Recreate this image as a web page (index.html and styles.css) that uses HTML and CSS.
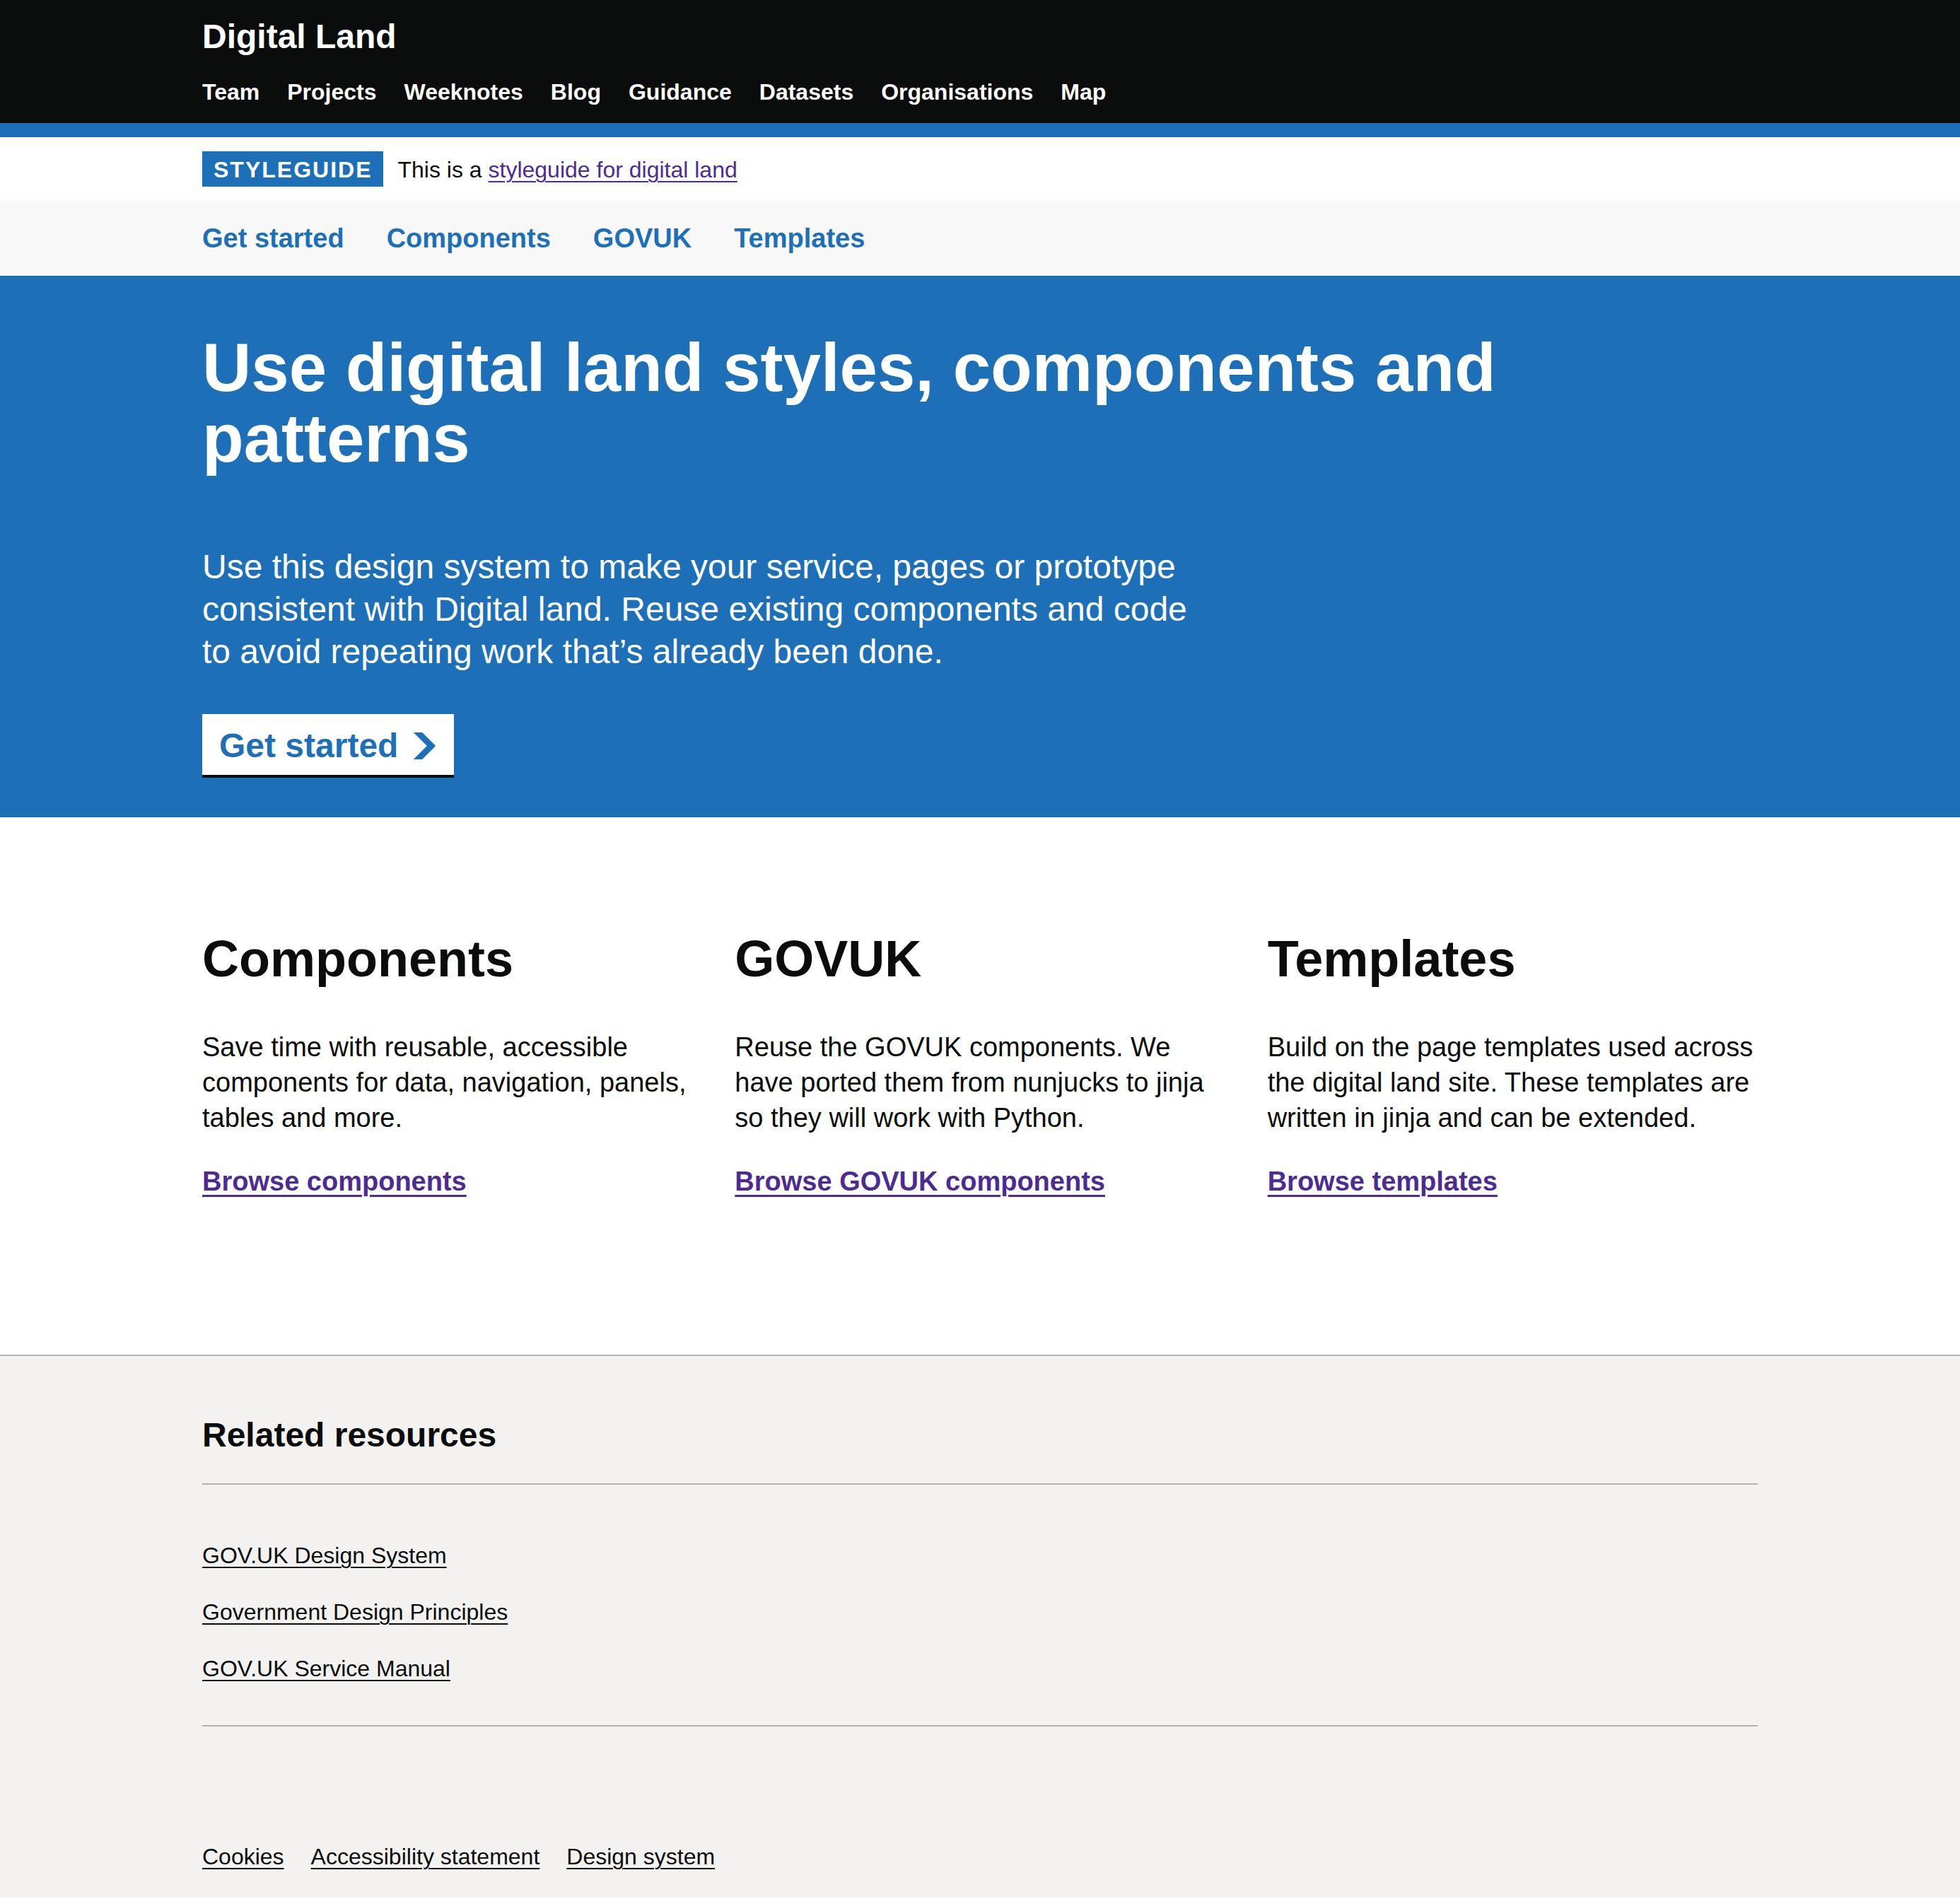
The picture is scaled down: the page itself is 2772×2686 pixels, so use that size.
FILE: index.html
```html
<!DOCTYPE html>
<html lang="en">
<head>
<meta charset="utf-8">
<title>Digital Land styleguide</title>
<link rel="stylesheet" href="styles.css">
</head>
<body>
<header class="site-header">
  <div class="width-container">
    <a class="site-logo" href="#">Digital Land</a>
    <nav class="header-nav">
      <a href="#">Team</a>
      <a href="#">Projects</a>
      <a href="#">Weeknotes</a>
      <a href="#">Blog</a>
      <a href="#">Guidance</a>
      <a href="#">Datasets</a>
      <a href="#">Organisations</a>
      <a href="#">Map</a>
    </nav>
  </div>
</header>

<div class="phase-banner">
  <div class="width-container phase-content">
    <strong class="tag">Styleguide</strong>
    <span class="phase-text">This is a <a class="visited-link" href="#">styleguide for digital land</a></span>
  </div>
</div>

<nav class="sub-nav">
  <div class="width-container sub-nav-list">
    <a href="#">Get started</a>
    <a href="#">Components</a>
    <a href="#">GOVUK</a>
    <a href="#">Templates</a>
  </div>
</nav>

<section class="hero">
  <div class="width-container">
    <h1 class="hero-title">Use digital land styles, components and patterns</h1>
    <p class="hero-lead">Use this design system to make your service, pages or prototype consistent with Digital land. Reuse existing components and code to avoid repeating work that’s already been done.</p>
    <a class="start-button" href="#">Get started<svg class="start-icon" xmlns="http://www.w3.org/2000/svg" width="35" height="38" viewBox="0 0 33 40" aria-hidden="true"><path fill="currentColor" d="M0 0h13l20 20-20 20H0l20-20z"/></svg></a>
  </div>
</section>

<main class="main">
  <div class="width-container card-grid">
    <div class="card">
      <h2 class="card-title">Components</h2>
      <p class="card-text">Save time with reusable, accessible components for data, navigation, panels, tables and more.</p>
      <p class="card-link"><a class="visited-link bold-link" href="#">Browse components</a></p>
    </div>
    <div class="card">
      <h2 class="card-title">GOVUK</h2>
      <p class="card-text">Reuse the GOVUK components. We have ported them from nunjucks to jinja so they will work with Python.</p>
      <p class="card-link"><a class="visited-link bold-link" href="#">Browse GOVUK components</a></p>
    </div>
    <div class="card">
      <h2 class="card-title">Templates</h2>
      <p class="card-text">Build on the page templates used across the digital land site. These templates are written in jinja and can be extended.</p>
      <p class="card-link"><a class="visited-link bold-link" href="#">Browse templates</a></p>
    </div>
  </div>
</main>

<footer class="site-footer">
  <div class="width-container">
    <h2 class="footer-heading">Related resources</h2>
    <ul class="footer-list">
      <li><a class="footer-link" href="#">GOV.UK Design System</a></li>
      <li><a class="footer-link" href="#">Government Design Principles</a></li>
      <li><a class="footer-link" href="#">GOV.UK Service Manual</a></li>
    </ul>
    <hr class="footer-break">
    <ul class="footer-meta">
      <li><a class="footer-link" href="#">Cookies</a></li>
      <li><a class="footer-link" href="#">Accessibility statement</a></li>
      <li><a class="footer-link" href="#">Design system</a></li>
    </ul>
  </div>
</footer>
</body>
</html>
```

FILE: styles.css
```css
html, body {
  margin: 0;
  padding: 0;
}

body {
  font-family: "Liberation Sans", Arial, sans-serif;
  color: #0b0c0c;
  background: #ffffff;
}

.width-container {
  max-width: 2200px;
  margin: 0 auto;
}

/* Header */
.site-header {
  background: #0b0c0c;
  padding: 28px 0 24px;
  border-bottom: 20px solid #1d70b8;
}

.site-logo {
  display: block;
  color: #ffffff;
  font-weight: 700;
  font-size: 48px;
  line-height: 48px;
  text-decoration: none;
}

.header-nav {
  display: flex;
  gap: 39px;
  margin-top: 34px;
}

.header-nav a {
  color: #ffffff;
  font-weight: 700;
  font-size: 32px;
  line-height: 40px;
  text-decoration: none;
}

/* Phase banner */
.phase-banner {
  background: #ffffff;
  padding: 20px 0;
}

.phase-content {
  display: flex;
  align-items: center;
}

.tag {
  display: inline-block;
  background: #1d70b8;
  color: #ffffff;
  font-weight: 700;
  font-size: 32px;
  line-height: 32px;
  letter-spacing: 2px;
  text-transform: uppercase;
  padding: 10px 16px 8px;
  margin-right: 20px;
}

.phase-text {
  font-size: 32px;
  line-height: 40px;
  padding-top: 2px;
}

.visited-link {
  color: #4c2c92;
  text-decoration: underline;
  text-decoration-thickness: 2px;
  text-underline-offset: 0.1578em;
}

/* Sub navigation */
.sub-nav {
  background: #f8f8f8;
  padding: 28px 0 28px;
}

.sub-nav-list {
  display: flex;
  gap: 60px;
}

.sub-nav-list a {
  color: #1d70b8;
  font-weight: 700;
  font-size: 38px;
  line-height: 50px;
  text-decoration: none;
}

/* Hero */
.hero {
  background: #1d70b8;
  color: #ffffff;
  padding-top: 80px;
}

.hero-title {
  margin: 0 0 102px;
  font-size: 96px;
  line-height: 100px;
  font-weight: 700;
}

.hero-lead {
  margin: 0 0 58px;
  max-width: 1420px;
  font-size: 48px;
  line-height: 60px;
}

.start-button {
  display: inline-flex;
  align-items: center;
  background: #ffffff;
  color: #1d70b8;
  font-weight: 700;
  font-size: 48px;
  line-height: 48px;
  padding: 17px 20px 13px;
  border: 4px solid #ffffff;
  box-shadow: 0 4px 0 #0b0c0c;
  text-decoration: none;
  margin-bottom: 60px;
}

.start-icon {
  margin-left: 20px;
  flex-shrink: 0;
}

/* Main cards */
.main {
  padding: 160px 0 220px;
}

.card-grid {
  display: grid;
  grid-template-columns: repeat(3, 1fr);
  column-gap: 60px;
}

.card-title {
  margin: 0 0 60px;
  font-size: 72px;
  line-height: 80px;
  font-weight: 700;
}

.card-text {
  margin: 0 0 40px;
  font-size: 38px;
  line-height: 50px;
}

.card-link {
  margin: 0;
  font-size: 38px;
  line-height: 50px;
}

.bold-link {
  font-weight: 700;
  text-decoration-thickness: 3px;
}

/* Footer */
.site-footer {
  background: #f3f2f1;
  border-top: 2px solid #b1b4b6;
  padding: 82px 0 38px;
}

.footer-heading {
  margin: 0 0 80px;
  padding-bottom: 38px;
  border-bottom: 2px solid #b1b4b6;
  font-size: 48px;
  line-height: 60px;
  font-weight: 700;
}

.footer-list {
  list-style: none;
  margin: 0 0 60px;
  padding: 0;
  display: flex;
  flex-direction: column;
  gap: 40px;
}

.footer-list li,
.footer-meta li {
  font-size: 32px;
  line-height: 40px;
}

.footer-link {
  color: #0b0c0c;
  text-decoration: underline;
  text-decoration-thickness: 2px;
  text-underline-offset: 0.1578em;
}

.footer-break {
  margin: 0 0 164px;
  border: 0;
  border-bottom: 2px solid #b1b4b6;
}

.footer-meta {
  list-style: none;
  margin: 0;
  padding: 0;
  display: flex;
  gap: 38px;
}
```
